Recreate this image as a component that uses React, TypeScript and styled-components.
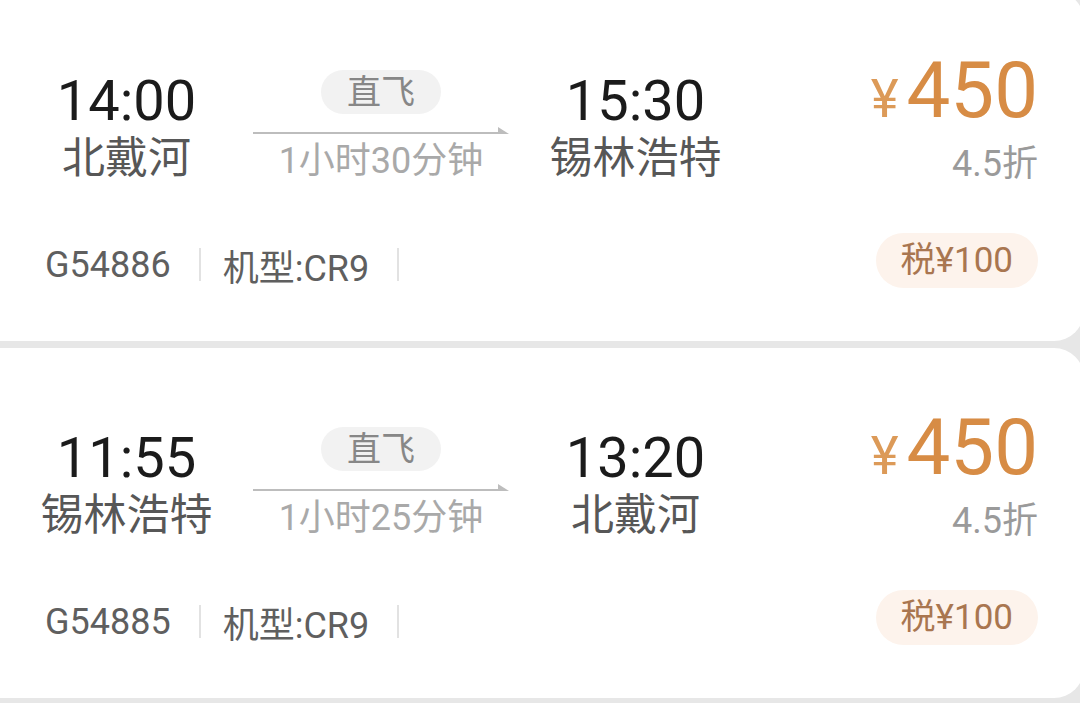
import React from 'react'
import styled, { createGlobalStyle } from 'styled-components'

const GlobalStyle = createGlobalStyle`
  html, body {
    margin: 0;
    padding: 0;
    background: #e7e7e7;
  }
  body {
    font-family: Roboto, "Noto Sans CJK SC", "Noto Sans", sans-serif;
    -webkit-font-smoothing: antialiased;
  }
`

type Flight = {
  id: string
  depTime: string
  depCity: string
  arrTime: string
  arrCity: string
  duration: string
  price: number
  discount: string
  tax: number
  aircraft: string
}

const flights: Flight[] = [
  {
    id: 'G54886',
    depTime: '14:00',
    depCity: '北戴河',
    arrTime: '15:30',
    arrCity: '锡林浩特',
    duration: '1小时30分钟',
    price: 450,
    discount: '4.5折',
    tax: 100,
    aircraft: 'CR9',
  },
  {
    id: 'G54885',
    depTime: '11:55',
    depCity: '锡林浩特',
    arrTime: '13:20',
    arrCity: '北戴河',
    duration: '1小时25分钟',
    price: 450,
    discount: '4.5折',
    tax: 100,
    aircraft: 'CR9',
  },
]

function RouteArrow() {
  return (
    <ArrowSvg viewBox="0 0 256 10" width={256} height={10}>
      <line x1="0" y1="8" x2="250" y2="8" stroke="#bdbdbd" strokeWidth="2" />
      <polygon points="245,2 256,9 245,9" fill="#bdbdbd" />
    </ArrowSvg>
  )
}

function FlightCard({ flight }: { flight: Flight }) {
  return (
    <Card>
      <TopRow>
        <Endpoint>
          <Time>{flight.depTime}</Time>
          <City>{flight.depCity}</City>
        </Endpoint>

        <Route>
          <DirectTag>直飞</DirectTag>
          <RouteArrow />
          <Duration>{flight.duration}</Duration>
        </Route>

        <Endpoint>
          <Time>{flight.arrTime}</Time>
          <City>{flight.arrCity}</City>
        </Endpoint>

        <PriceBox>
          <Price>
            <Currency>¥</Currency>
            <Amount>{flight.price}</Amount>
          </Price>
          <Discount>{flight.discount}</Discount>
        </PriceBox>
      </TopRow>

      <Footer>
        <Meta>{flight.id}</Meta>
        <Divider />
        <Meta>机型:{flight.aircraft}</Meta>
        <Divider />
        <TaxTag>税¥{flight.tax}</TaxTag>
      </Footer>
    </Card>
  )
}

export default function App() {
  return (
    <>
      <GlobalStyle />
      <Page>
        {flights.map(f => (
          <FlightCard key={f.id} flight={f} />
        ))}
      </Page>
    </>
  )
}

const Page = styled.div`
  height: 703px;
  overflow: hidden;
  display: flex;
  flex-direction: column;
  gap: 7px;
  > :first-child {
    margin-top: -9px;
  }
`

const Card = styled.div`
  flex-shrink: 0;
  box-sizing: border-box;
  height: 350px;
  margin: 0 -4px 0 -30px;
  padding: 69px 46px 53px 30px;
  border-radius: 30px;
  background: #fff;
  display: flex;
  flex-direction: column;
`

const TopRow = styled.div`
  display: flex;
  align-items: flex-start;
`

const Endpoint = styled.div`
  width: 253px;
  flex-shrink: 0;
  display: flex;
  flex-direction: column;
  align-items: center;
`

const Time = styled.div`
  margin-top: 11px;
  font-size: 56px;
  line-height: 60px;
  color: #1b1b1b;
`

const City = styled.div`
  margin-top: 3px;
  font-size: 43px;
  line-height: 48px;
  color: #575757;
  white-space: nowrap;
`

const Route = styled.div`
  width: 256px;
  flex-shrink: 0;
  display: flex;
  flex-direction: column;
  align-items: center;
`

const DirectTag = styled.div`
  margin-top: 10px;
  height: 44px;
  padding: 0 26px;
  border-radius: 22px;
  background: #f2f2f2;
  color: #878787;
  font-size: 34px;
  line-height: 44px;
`

const ArrowSvg = styled.svg`
  display: block;
  margin-top: 11px;
`

const Duration = styled.div`
  margin-top: 6px;
  font-size: 36px;
  line-height: 40px;
  color: #a9a9a9;
  white-space: nowrap;
`

const PriceBox = styled.div`
  flex: 1;
  display: flex;
  flex-direction: column;
  align-items: flex-end;
`

const Price = styled.div`
  margin-top: 1px;
  display: flex;
  align-items: baseline;
  color: #d78c45;
  line-height: 60px;
`

const Currency = styled.span`
  margin-right: 8px;
  font-size: 53px;
  color: #dc9a58;
`

const Amount = styled.span`
  font-size: 78px;
`

const Discount = styled.div`
  margin-top: 15px;
  font-size: 36px;
  line-height: 40px;
  color: #9a9a9a;
`

const Footer = styled.div`
  margin-top: auto;
  height: 55px;
  padding-left: 45px;
  display: flex;
  align-items: center;
`

const Meta = styled.span`
  margin-top: 8px;
  font-size: 36px;
  color: #5f5f5f;
  white-space: nowrap;
`

const Divider = styled.span`
  width: 2px;
  height: 33px;
  margin: 8px 22px 0 28px;
  background: #e2e2e2;
`

const TaxTag = styled.span`
  margin-left: auto;
  height: 55px;
  padding: 0 25px;
  border-radius: 28px;
  background: #fdf3ec;
  color: #a97650;
  font-size: 35px;
  line-height: 55px;
  white-space: nowrap;
`
